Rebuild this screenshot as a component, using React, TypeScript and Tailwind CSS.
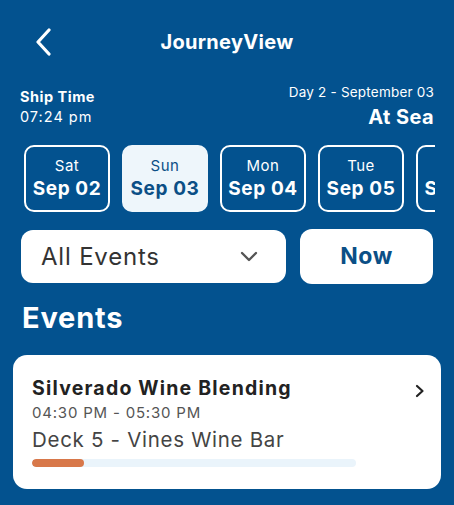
import React from "react";

const days = [
  { d: "Sat", date: "Sep 02", sel: false },
  { d: "Sun", date: "Sep 03", sel: true },
  { d: "Mon", date: "Sep 04", sel: false },
  { d: "Tue", date: "Sep 05", sel: false },
  { d: "Wed", date: "Sep 06", sel: false },
];

export default function App() {
  return (
    <div
      className="w-[454px] h-[505px] overflow-hidden bg-[#03528f] text-white"
      style={{ fontFamily: "Inter, 'Noto Sans', sans-serif" }}
    >
      <div className="relative h-[84px] flex items-center justify-center">
        <svg className="absolute left-[34px] top-[28px]" width="18" height="28" viewBox="0 0 18 28">
          <path d="M15 2 L4 14 L15 26" fill="none" stroke="white" strokeWidth="3.2" strokeLinecap="round" strokeLinejoin="round" />
        </svg>
        <div className="text-[20px] font-bold tracking-[0.3px]">JourneyView</div>
      </div>

      <div className="flex justify-between px-[20px] -mt-[1px]">
        <div className="pt-[4px]">
          <div className="text-[14.5px] font-bold leading-[20px] tracking-[0.5px]">Ship Time</div>
          <div className="text-[14.5px] leading-[20px] tracking-[1px]">07:24 pm</div>
        </div>
        <div className="text-right">
          <div className="text-[13.5px] leading-[18px] tracking-[0.2px]">Day 2 - September 03</div>
          <div className="text-[20px] font-bold leading-[26px] mt-[3px] tracking-[0.4px]">At Sea</div>
        </div>
      </div>

      <div className="ml-[24px] mr-[19px] mt-[15px] overflow-hidden">
        <div className="flex gap-[12px]">
          {days.map((x) => (
            <div
              key={x.date}
              className={
                "shrink-0 w-[86px] h-[67px] rounded-[10px] border-2 flex flex-col items-center justify-center " +
                (x.sel ? "bg-[#eef6fb] border-[#eef6fb] text-[#0b4f86]" : "border-white text-white")
              }
            >
              <div className="text-[15px] leading-[18px] tracking-[0.5px]">{x.d}</div>
              <div className="text-[19px] font-bold leading-[24px] mt-[2px] tracking-[0.6px] whitespace-nowrap">{x.date}</div>
            </div>
          ))}
        </div>
      </div>

      <div className="flex gap-[14px] px-[21px] mt-[18px]">
        <div className="w-[265px] h-[53px] rounded-[12px] bg-white flex items-center justify-between pl-[20px] pr-[28px]">
          <span className="text-[24px] text-[#333] tracking-[0.8px]">All Events</span>
          <svg width="18" height="12" viewBox="0 0 18 12">
            <path d="M2 2 L9 9 L16 2" fill="none" stroke="#555" strokeWidth="2.4" strokeLinecap="round" strokeLinejoin="round" />
          </svg>
        </div>
        <div className="w-[133px] h-[55px] -mt-[1px] rounded-[12px] bg-white flex items-center justify-center">
          <span className="text-[23px] font-bold text-[#0b4f86] tracking-[0.5px]">Now</span>
        </div>
      </div>

      <div className="px-[22px] mt-[16px] text-[29px] font-bold leading-[36px] tracking-[0.8px]">Events</div>

      <div className="mx-[13px] mt-[19px] h-[134px] rounded-[14px] bg-white relative pl-[19px] pt-[21px]">
        <div className="text-[19.5px] font-bold text-[#222] leading-[24px] tracking-[1.2px]">Silverado Wine Blending</div>
        <div className="text-[15px] text-[#555] leading-[20px] mt-[3px] tracking-[0.8px]">04:30 PM - 05:30 PM</div>
        <div className="text-[20.5px] text-[#444] leading-[26px] mt-[4px] tracking-[0.7px]">Deck 5 - Vines Wine Bar</div>
        <div className="mt-[6px] w-[324px] h-[8px] rounded-full bg-[#eaf4fb] overflow-hidden">
          <div className="h-full w-[52px] rounded-full bg-[#d8784a]" />
        </div>
        <svg className="absolute right-[16px] top-[29px]" width="10" height="14" viewBox="0 0 10 14">
          <path d="M2 2 L7.5 7 L2 12" fill="none" stroke="#222" strokeWidth="2.2" strokeLinecap="round" strokeLinejoin="round" />
        </svg>
      </div>
    </div>
  );
}
